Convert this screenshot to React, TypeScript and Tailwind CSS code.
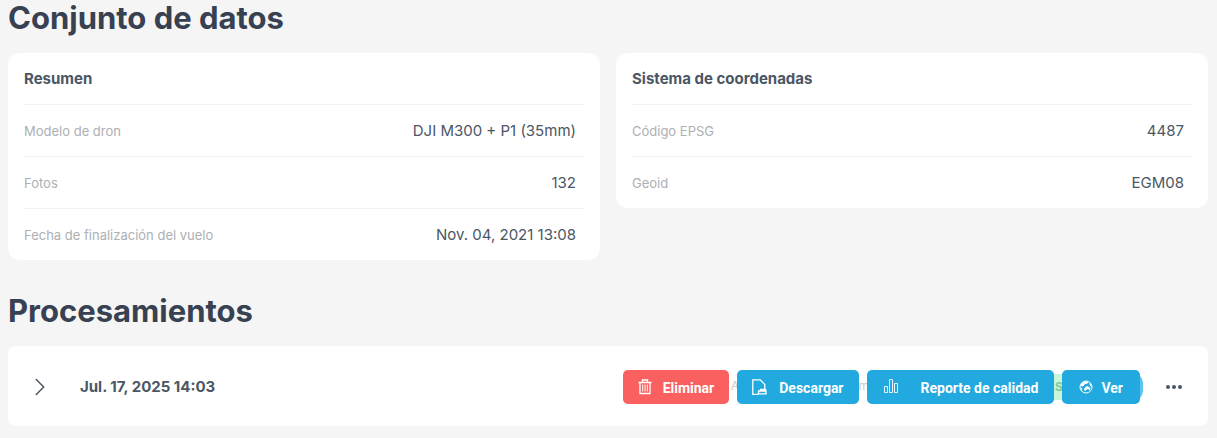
import type { ReactNode } from 'react';
import { ChevronRight } from 'lucide-react';

type Row = { label: string; value: string };

const summary: Row[] = [
  { label: 'Modelo de dron', value: 'DJI M300 + P1 (35mm)' },
  { label: 'Fotos', value: '132' },
  { label: 'Fecha de finalización del vuelo', value: 'Nov. 04, 2021 13:08' },
];

const coordinates: Row[] = [
  { label: 'Código EPSG', value: '4487' },
  { label: 'Geoid', value: 'EGM08' },
];

const TrashIcon = () => (
  <svg className="h-4 w-3.5" viewBox="0 0 14 16" fill="none" stroke="currentColor">
    <path d="M.5 3.5h13M4.5 3V1h5v2M2 3.5v11h10v-11" strokeWidth="1.3" />
    <path d="M4.7 5.5v7M7 5.5v7M9.3 5.5v7" />
  </svg>
);

const FileIcon = () => (
  <svg className="h-4 w-4" viewBox="0 0 16 16" fill="none" stroke="currentColor" strokeWidth="1.3">
    <path d="M6.5 15.3H.8V.8h7.4l4.6 4.7v5" />
    <path d="M6.5 14.8h7.5v-2.8H6.5zM8.5 12v-1.5h5V12" />
  </svg>
);

const ChartIcon = () => (
  <svg className="h-4 w-4" viewBox="0 0 16 16" fill="none" stroke="currentColor" strokeWidth="0.9">
    <path d="M1.5 7.5h3v6h-3zM6.5 .5h3v13h-3zM11.5 4.5h3v9h-3z" />
  </svg>
);

const GlobeIcon = () => (
  <svg className="h-3.5 w-3.5" viewBox="0 0 14 14" fill="none" stroke="currentColor">
    <circle cx="7" cy="7" r="6" />
    <path
      d="M1.5 5L4 2l3-.8 2.5.8-1 1.5-2.5.5-1.5 2-2 .5zM10 3l2 1.5 1 2.5-1.5-.5zM5.5 8L8 6l2 1 1.5 1.5-1 2-1.5-1.5-1.5.5-1 1.5-1.5-1zM1.5 7.5l1.5 1 .5 2-1-.5z"
      fill="currentColor"
      stroke="none"
    />
  </svg>
);

const InfoCard = ({ title, rows }: { title: string; rows: Row[] }) => (
  <section className="rounded-xl bg-white px-4">
    <h2 className="flex h-[51px] items-center pt-0.5 font-bold">{title}</h2>
    <dl>
      {rows.map((row) => (
        <div key={row.label} className="flex h-[52px] items-center justify-between border-t border-[#f1f1f1] pt-0.5 pr-2">
          <dt className="text-[13px] text-[#adb0b4]">{row.label}</dt>
          <dd>{row.value}</dd>
        </div>
      ))}
    </dl>
  </section>
);

const ActionButton = ({ className, icon, children }: { className: string; icon: ReactNode; children: string }) => (
  <button type="button" className={`relative flex h-[34px] items-center rounded-[5px] text-white ${className}`}>
    {icon}
    <span className="pt-0.5 font-[Roboto] text-sm font-bold">{children}</span>
  </button>
);

const App = () => {
  return (
    <main className="min-h-screen bg-[#f5f5f5] px-2 pb-3 font-[Inter,sans-serif] text-[15px] text-[#4b5664]">
      <h1 className="h-[53px] text-[31px] leading-9 font-[650] text-[#374151]">Conjunto de datos</h1>

      <div className="grid grid-cols-2 items-start gap-4 pr-px">
        <InfoCard title="Resumen" rows={summary} />
        <InfoCard title="Sistema de coordenadas" rows={coordinates} />
      </div>

      <h1 className="mt-8 mb-4 text-[31px] leading-[38px] font-[650] text-[#374151]">Procesamientos</h1>

      <div className="mr-px flex h-20 items-center rounded-lg bg-white pt-0.5 pr-6 pl-5">
        <button type="button" aria-label="Expandir" className="mr-7">
          <ChevronRight className="h-6 w-6 scale-125" strokeWidth={1.2} />
        </button>
        <span className="font-bold">Jul. 17, 2025 14:03</span>

        <div className="relative ml-auto flex gap-2">
          {/* row contents the floating actions sit on */}
          <span className="absolute top-2 right-[401px] text-xs text-[#c9cbce]">A</span>
          <span className="absolute top-2 right-[271px] text-xs text-[#c9cbce]">m</span>
          <span className="absolute top-1 right-[69px] flex h-[26px] w-6 items-center bg-[#c9f5da] pl-2 text-xs font-bold text-[#7fca9b]">S</span>
          <span className="absolute top-0.5 -right-[3px] h-[30px] w-10 rounded-xl bg-[#5cc4ee]" />
          <ActionButton className="gap-[11px] bg-[#f9605f] px-[15px]" icon={<TrashIcon />}>Eliminar</ActionButton>
          <ActionButton className="gap-[11px] bg-[#22a9e0] px-[15px]" icon={<FileIcon />}>Descargar</ActionButton>
          <ActionButton className="gap-[22px] bg-[#22a9e0] px-4" icon={<ChartIcon />}>Reporte de calidad</ActionButton>
          <ActionButton className="gap-2 bg-[#22a9e0] px-[17px]" icon={<GlobeIcon />}>Ver</ActionButton>
        </div>
        <button type="button" aria-label="Más opciones" className="ml-6">
          <svg className="h-5 w-5" viewBox="0 0 20 20" fill="currentColor">
            <circle cx="4" cy="10" r="2" />
            <circle cx="10" cy="10" r="2" />
            <circle cx="16" cy="10" r="2" />
          </svg>
        </button>
      </div>
    </main>
  );
};

export default App;
